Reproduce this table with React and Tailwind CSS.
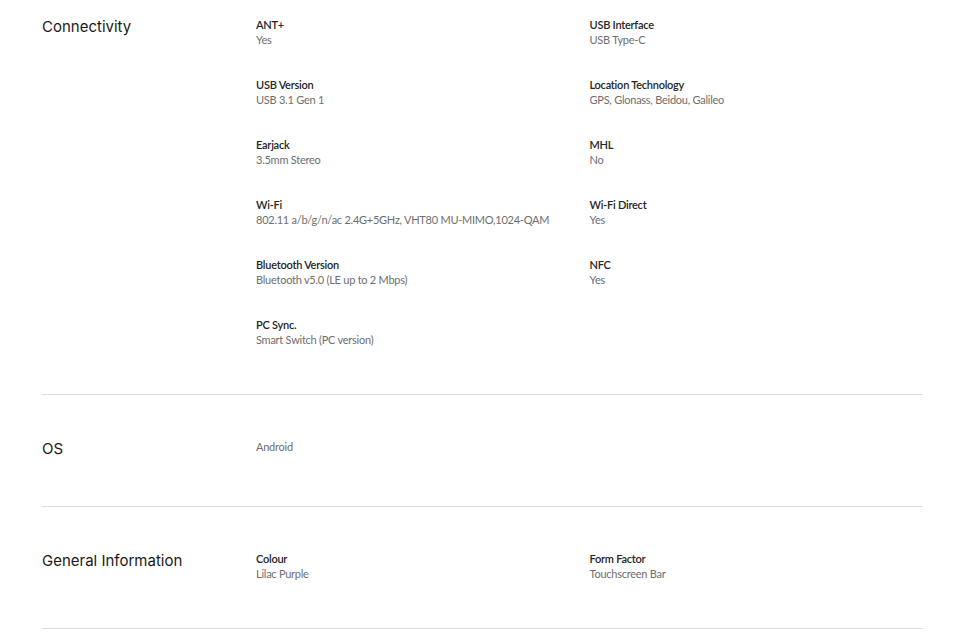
const sections = [
  {
    title: 'Connectivity',
    specs: [
      { label: 'ANT+', value: 'Yes' },
      { label: 'USB Interface', value: 'USB Type-C' },
      { label: 'USB Version', value: 'USB 3.1 Gen 1' },
      { label: 'Location Technology', value: 'GPS, Glonass, Beidou, Galileo' },
      { label: 'Earjack', value: '3.5mm Stereo' },
      { label: 'MHL', value: 'No' },
      { label: 'Wi-Fi', value: '802.11 a/b/g/n/ac 2.4G+5GHz, VHT80 MU-MIMO,1024-QAM' },
      { label: 'Wi-Fi Direct', value: 'Yes' },
      { label: 'Bluetooth Version', value: 'Bluetooth v5.0 (LE up to 2 Mbps)' },
      { label: 'NFC', value: 'Yes' },
      { label: 'PC Sync.', value: 'Smart Switch (PC version)' },
    ],
  },
  {
    title: 'OS',
    specs: [{ label: '', value: 'Android' }],
  },
  {
    title: 'General Information',
    specs: [
      { label: 'Colour', value: 'Lilac Purple' },
      { label: 'Form Factor', value: 'Touchscreen Bar' },
    ],
  },
];

const Spec = ({ label, value }) => (
  <div className="text-[11px] leading-[15px] tracking-[-0.25px]">
    {label && <div className="font-semibold text-[#252525]">{label}</div>}
    <div className="text-[#6e6e6e]">{value}</div>
  </div>
);

const Section = ({ title, specs, first, single }) => (
  <div className={`flex border-b border-[#dcdcdc] ${first ? 'pt-[17px] pb-[47px]' : single ? 'pt-[44px] pb-[49px]' : 'pt-[44px] pb-[47px]'}`}>
    <h2 className="w-[214px] shrink-0 text-[15px] leading-[17px] text-[#1a1a1a] font-['Inter',sans-serif] pt-px">
      {title}
    </h2>
    <div className="grid flex-1 grid-cols-2 gap-y-[30px]">
      {specs.map((s) => (
        <Spec key={s.label + s.value} {...s} />
      ))}
    </div>
  </div>
);

export default function App() {
  return (
    <div className="min-h-screen bg-white font-['Lato',sans-serif]">
      <div className="mx-[42px] w-[881px]">
        {sections.map((sec, i) => (
          <Section key={sec.title} {...sec} first={i === 0} single={sec.specs.length === 1} />
        ))}
      </div>
    </div>
  );
}
